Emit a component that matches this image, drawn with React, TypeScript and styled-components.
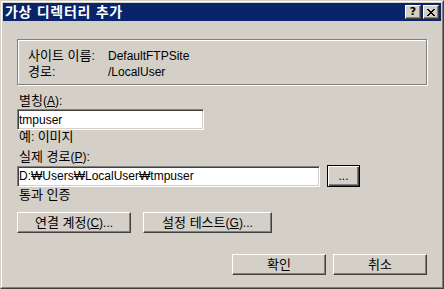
import styled, { createGlobalStyle } from 'styled-components'

const GlobalStyle = createGlobalStyle`
    html, body {
        margin: 0;
        padding: 0;
        background-color: #d4d0c8;
    }
    * {
        box-sizing: border-box;
    }
`

const FONT = `"Liberation Sans", "Noto Sans CJK KR", sans-serif`

const Window = styled.div`
    width: 444px;
    height: 289px;
    border: 1px solid;
    border-color: #d4d0c8 #404040 #404040 #d4d0c8;
    background-color: #d4d0c8;
    font-family: ${FONT};
    font-size: 12px;
    color: #000;
`

const Frame = styled.div`
    height: 100%;
    border: 1px solid;
    border-color: #ffffff #808080 #808080 #ffffff;
    padding: 1px;
    display: flex;
    flex-direction: column;
`

const TitleBar = styled.div`
    height: 18px;
    background-color: #0a246a;
    display: flex;
    align-items: center;
    padding: 0 2px 0 2px;
`

const Title = styled.div`
    flex: 1;
    color: #fff;
    font-weight: bold;
    font-size: 14px;
    letter-spacing: 0.7px;
    line-height: 18px;
`

const CaptionBtn = styled.div<{ $gap?: number }>`
    width: 16px;
    height: 14px;
    margin-left: ${(p) => p.$gap ?? 0}px;
    background-color: #d4d0c8;
    border: 1px solid;
    border-color: #ffffff #404040 #404040 #ffffff;
    box-shadow: inset -1px -1px #808080;
    display: flex;
    justify-content: center;
    align-items: center;
    font-family: "DejaVu Sans", sans-serif;
    font-weight: bold;
    font-size: 11px;
    line-height: 12px;
`

const Content = styled.div`
    flex: 1;
    padding: 18px 14px 0 14px;
    display: flex;
    flex-direction: column;
`

const GroupBox = styled.div`
    width: 410px;
    height: 46px;
    border: 1px solid #808080;
    box-shadow: 1px 1px 0 #ffffff, inset 1px 1px 0 #ffffff;
    padding: 8px 0 0 10px;
`

const InfoRow = styled.div`
    display: flex;
    line-height: 16px;
`

const InfoLabel = styled.div`
    width: 80px;
`

// 한글은 굴림처럼 조금 크게
const Ko = styled.span`
    font-size: 13px;
`

const Label = styled.div<{ $top?: number }>`
    line-height: 16px;
    margin-top: ${(p) => p.$top ?? 0}px;
    padding-left: 2px;
`

const Row = styled.div<{ $top?: number; $gap?: number; $end?: boolean }>`
    display: flex;
    align-items: center;
    gap: ${(p) => p.$gap ?? 0}px;
    margin-top: ${(p) => p.$top ?? 0}px;
    justify-content: ${(p) => (p.$end ? 'flex-end' : 'flex-start')};
`

const TextBox = styled.input<{ $w: number }>`
    width: ${(p) => p.$w}px;
    height: 21px;
    border: 1px solid;
    border-color: #808080 #ffffff #ffffff #808080;
    box-shadow: inset 1px 1px #404040, inset -1px -1px #d4d0c8;
    background-color: #fff;
    padding: 0 0 0 1px;
    margin: 0;
    font-family: ${FONT};
    font-size: 12px;
    color: #000;
    outline: none;
`

const Button = styled.button<{ $w: number; $h?: number; $default?: boolean }>`
    width: ${(p) => p.$w}px;
    height: ${(p) => p.$h ?? 21}px;
    margin: 0;
    padding: 0;
    background-color: #d4d0c8;
    font-family: ${FONT};
    font-size: 12px;
    color: #000;
    border: 1px solid;
    border-color: ${(p) => (p.$default ? '#000' : '#ffffff #404040 #404040 #ffffff')};
    box-shadow: ${(p) =>
        p.$default
            ? 'inset 1px 1px #ffffff, inset -1px -1px #404040, inset -2px -2px #808080'
            : 'inset -1px -1px #808080'};
    line-height: 16px;
`

const U = styled.span`
    text-decoration: underline;
`

const CloseIcon = () => (
    <svg width="8" height="7" viewBox="0 0 8 7" shapeRendering="crispEdges">
        <path d="M0 0h2v1H0zM6 0h2v1H6zM1 1h2v1H1zM5 1h2v1H5zM2 2h4v1H2zM3 3h2v1H3zM2 4h4v1H2zM1 5h2v1H1zM5 5h2v1H5zM0 6h2v1H0zM6 6h2v1H6z" fill="#000" />
    </svg>
)

const App = () => {
    return (
        <>
            <GlobalStyle />
            <Window>
                <Frame>
                    <TitleBar>
                        <Title>가상 디렉터리 추가</Title>
                        <CaptionBtn>?</CaptionBtn>
                        <CaptionBtn $gap={2}>
                            <CloseIcon />
                        </CaptionBtn>
                    </TitleBar>

                    <Content>
                        <GroupBox>
                            <InfoRow>
                                <InfoLabel>
                                    <Ko>사이트 이름</Ko>:
                                </InfoLabel>
                                <div>DefaultFTPSite</div>
                            </InfoRow>
                            <InfoRow>
                                <InfoLabel>
                                    <Ko>경로</Ko>:
                                </InfoLabel>
                                <div>/LocalUser</div>
                            </InfoRow>
                        </GroupBox>

                        <Label $top={8}>
                            <Ko>별칭</Ko>(<U>A</U>):
                        </Label>
                        <Row>
                            <TextBox $w={187} defaultValue="tmpuser" readOnly />
                        </Row>
                        <Label $top={-1}>
                            <Ko>예</Ko>: <Ko>이미지</Ko>
                        </Label>

                        <Label $top={4}>
                            <Ko>실제 경로</Ko>(<U>P</U>):
                        </Label>
                        <Row $gap={7}>
                            <TextBox $w={303} defaultValue="D:₩Users₩LocalUser₩tmpuser" readOnly />
                            <Button $w={33} $h={22} $default>
                                ...
                            </Button>
                        </Row>
                        <Label $top={0}>
                            <Ko>통과 인증</Ko>
                        </Label>

                        <Row $top={9} $gap={12}>
                            <Button $w={114}>
                                <Ko>연결 계정</Ko>(<U>C</U>)...
                            </Button>
                            <Button $w={129}>
                                <Ko>설정 테스트</Ko>(<U>G</U>)...
                            </Button>
                        </Row>

                        <Row $top={21} $gap={7} $end>
                            <Button $w={94}>
                                <Ko>확인</Ko>
                            </Button>
                            <Button $w={94}>
                                <Ko>취소</Ko>
                            </Button>
                        </Row>
                    </Content>
                </Frame>
            </Window>
        </>
    )
}

export default App
